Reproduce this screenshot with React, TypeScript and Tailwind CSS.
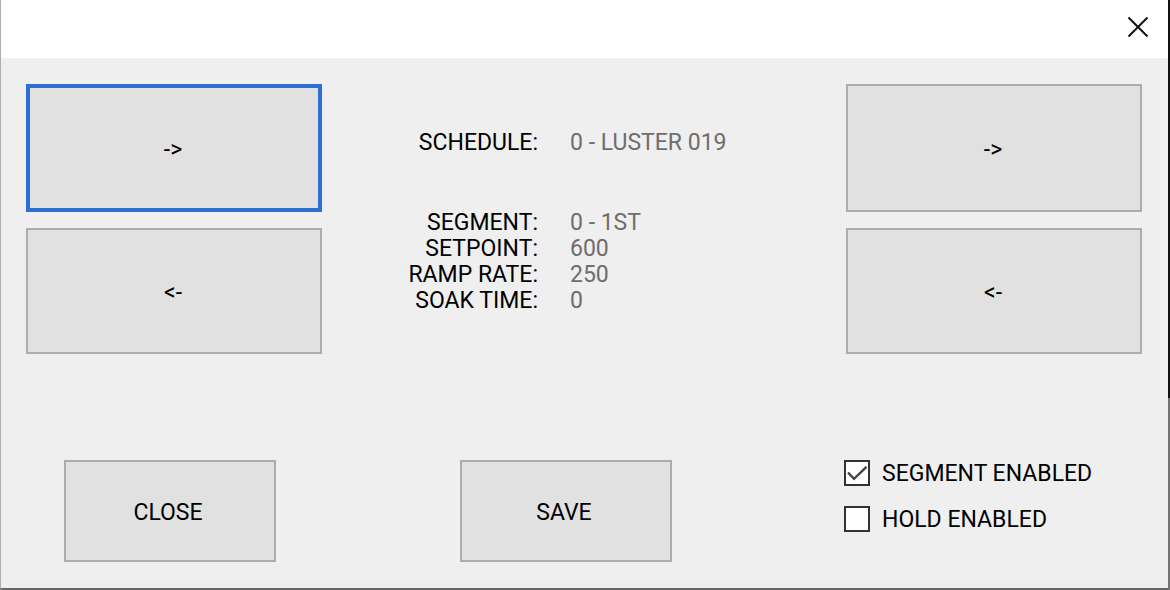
import { useState } from "react";

type StepButtonProps = {
  label: string;
  text: string;
  active?: boolean;
};

function StepButton({ label, text, active = false }: StepButtonProps) {
  return (
    <button
      type="button"
      aria-label={label}
      className={
        active
          ? "w-full border-4 border-[#2d6fd2] bg-[#e1e1e1] pt-1 pr-0.5"
          : "w-full border-2 border-[#adadad] bg-[#e1e1e1] pt-1 pr-0.5"
      }
    >
      {text}
    </button>
  );
}

function ActionButton({ text }: { text: string }) {
  return (
    <button
      type="button"
      className="h-[102px] w-[212px] border-2 border-[#adadad] bg-[#e1e1e1] pt-1 pr-1"
    >
      {text}
    </button>
  );
}

type CheckProps = {
  id: string;
  label: string;
  checked: boolean;
  onChange: (value: boolean) => void;
};

function Check({ id, label, checked, onChange }: CheckProps) {
  return (
    <div className="flex h-[26px] items-center gap-3">
      <span className="grid size-[26px] shrink-0">
        <input
          id={id}
          type="checkbox"
          checked={checked}
          onChange={(e) => onChange(e.target.checked)}
          className="col-start-1 row-start-1 size-[26px] appearance-none border-2 border-[#333333] bg-white"
        />
        {checked && (
          <svg
            viewBox="0 0 26 26"
            className="pointer-events-none col-start-1 row-start-1 size-[26px]"
            fill="none"
            stroke="#444444"
            strokeWidth="2.4"
            aria-hidden="true"
          >
            <path d="M4 12.5 L10 18.8 L22.5 6.8" />
          </svg>
        )}
      </span>
      <label htmlFor={id} className="pt-0.5 whitespace-nowrap">
        {label}
      </label>
    </div>
  );
}

const segmentRows = [
  ["SEGMENT:", "0 - 1ST"],
  ["SETPOINT:", "600"],
  ["RAMP RATE:", "250"],
  ["SOAK TIME:", "0"],
];

export default function App() {
  const [segment, setSegment] = useState(true);
  const [hold, setHold] = useState(false);

  return (
    <div className="flex min-h-screen bg-[linear-gradient(to_bottom,#111111_398px,#737373_398px)] pr-[2px] font-[Roboto,sans-serif] text-[23px] leading-[26px] text-black">
      <div className="flex grow flex-col border-b-2 border-l border-b-[#666666] border-l-[#adadad] bg-[#efefef]">
        <header className="flex h-[58px] items-center justify-end bg-white pr-[19px] pb-1">
          <button type="button" aria-label="Close window">
            <svg viewBox="0 0 22 22" className="size-[22px]" stroke="#111111" strokeWidth="2" aria-hidden="true">
              <path d="M1.5 1.5 L20.5 20.5 M20.5 1.5 L1.5 20.5" />
            </svg>
          </button>
        </header>
        <main className="flex grow flex-col justify-between pt-[26px] pr-[26px] pb-[26px] pl-[25px]">
          <div className="grid grid-cols-[296px_1fr_296px]">
            <div className="grid grid-rows-[128px_126px] gap-4">
              <StepButton label="Next schedule" text="->" active />
              <StepButton label="Previous schedule" text="<-" />
            </div>
            <dl className="grid grid-cols-[216px_1fr] content-start gap-x-8 pt-[46px]">
              <dt className="pb-[54px] text-right">SCHEDULE:</dt>
              <dd className="text-[#6d6d6d]">0 - LUSTER 019</dd>
              {segmentRows.map(([name, value]) => (
                <div key={name} className="col-span-2 grid grid-cols-subgrid">
                  <dt className="text-right">{name}</dt>
                  <dd className="text-[#6d6d6d]">{value}</dd>
                </div>
              ))}
            </dl>
            <div className="grid grid-rows-[128px_126px] gap-4">
              <StepButton label="Next segment" text="->" />
              <StepButton label="Previous segment" text="<-" />
            </div>
          </div>
          <div className="grid grid-cols-[396fr_384fr_298fr] pl-[38px]">
            <ActionButton text="CLOSE" />
            <ActionButton text="SAVE" />
            <div className="flex flex-col gap-5">
              <Check id="segment-enabled" label="SEGMENT ENABLED" checked={segment} onChange={setSegment} />
              <Check id="hold-enabled" label="HOLD ENABLED" checked={hold} onChange={setHold} />
            </div>
          </div>
        </main>
      </div>
    </div>
  );
}
